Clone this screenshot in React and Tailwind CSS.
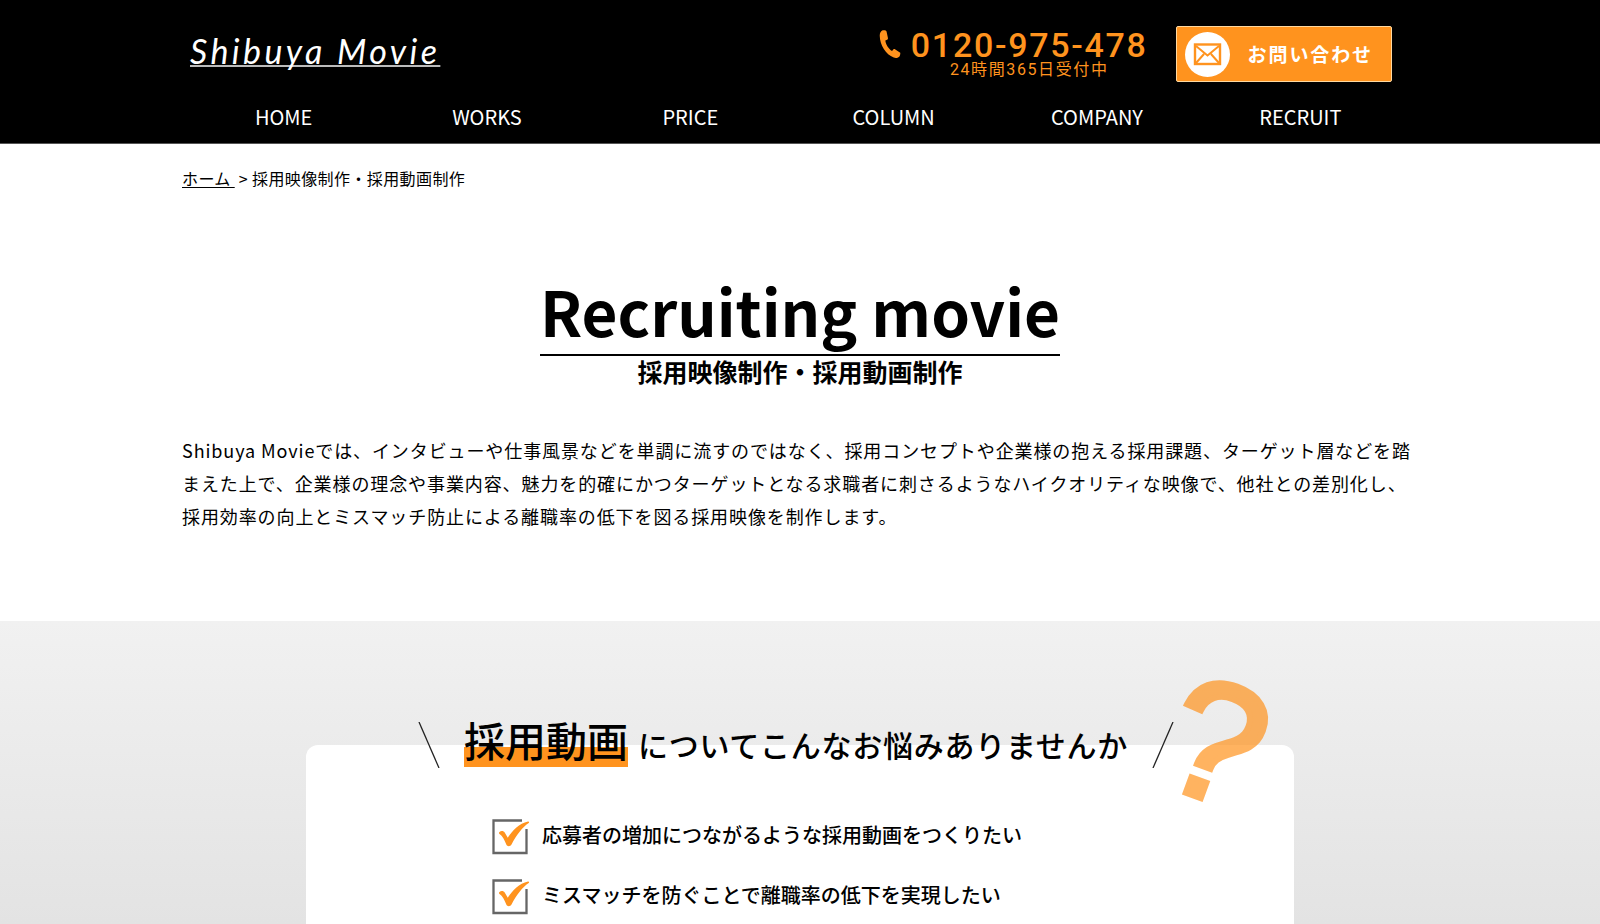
const menu = ['HOME', 'WORKS', 'PRICE', 'COLUMN', 'COMPANY', 'RECRUIT'];

const worries = [
    '応募者の増加につながるような採用動画をつくりたい',
    'ミスマッチを防ぐことで離職率の低下を実現したい',
];

function PhoneIcon() {
    return (
        <svg viewBox="0 0 22 30" className="w-[22px] h-7 mt-1" fill="#ff931e" aria-hidden="true">
            <path d="M3.2.4C1.2 1.2 0 3.2 0 6.2c.2 10 6.500 20.200 15 23.300 2.500.9 5 .3 6.300-1.500.6-.9.900-2.200.7-3.500l-5.300-3.700c-.8-.5-1.600-.4-2.200.2l-1.300 1.500C9.500 20.300 6.400 15.200 6 11.200l1.900-.8c.7-.3 1-.9.9-1.700L7.300 1.600C7 .5 5 0 3.200.4z" />
        </svg>
    );
}

function MailIcon() {
    return (
        <svg viewBox="0 0 45 45" className="w-[45px] h-[45px]" aria-hidden="true">
            <circle cx="22.500" cy="22.500" r="22.500" fill="#fff" />
            <g fill="none" stroke="#ff931e" strokeWidth="2">
                <rect x="10" y="12.500" width="25" height="19.500" strokeWidth="2.400" />
                <path d="M11 14l11.500 9.500L34 14M11 31l8-9M34 31l-8-9" />
            </g>
        </svg>
    );
}

function CheckIcon() {
    return (
        <svg viewBox="0 0 38 36" className="w-[38px] h-9 shrink-0" aria-hidden="true">
            <path d="M30 1.500H1.500V34H34.500V10" fill="none" stroke="#666" strokeWidth="2.300" />
            <path d="M7.500 13c1.500-1.500 4.300-1.200 5.500 1l2.800 4.800C20.500 11.500 27 4.500 36 2.500c1.200-.1 1.400.8.7 1.500C30 8.500 24.500 16 19.500 25.500c-1.200 2.300-4.300 2.300-5.200 0C12.500 21 10.500 17 7.500 15c-.7-.5-.7-1.300 0-2z" fill="#ff931e" />
        </svg>
    );
}

function Slash({ flip }) {
    return (
        <svg viewBox="0 0 22 46" className="w-[22px] h-[46px] mt-3" aria-hidden="true">
            <path d={flip ? 'M21 0L1 46' : 'M1 0L21 46'} stroke="#222" strokeWidth="1.300" />
        </svg>
    );
}

export default function App() {
    return (
        <div className="min-h-screen flex flex-col bg-white text-black font-['Noto_Sans_CJK_JP',sans-serif]">
            <header className="bg-black border-b border-[#555]">
                <div className="max-w-[1236px] mx-auto">
                    <div className="flex items-start justify-between pt-[26px] pl-2 pr-[26px]">
                        <a href="#" className="mt-2 text-white text-[34px] leading-[34px] italic tracking-widest font-[Lato,sans-serif] underline decoration-2 decoration-[#bbb] underline-offset-1 [text-decoration-skip-ink:none]">
                            Shibuya Movie
                        </a>
                        <div className="flex gap-7">
                            <a href="tel:0120975478" className="flex gap-[10px] text-[#ff931e] font-[Roboto,'Noto_Sans_CJK_JP',sans-serif]">
                                <PhoneIcon />
                                <span className="flex flex-col items-center">
                                    <span className="text-[34px] leading-[38px] font-medium tracking-wider">0120-975-478</span>
                                    <span className="text-base leading-3 tracking-widest">24時間365日受付中</span>
                                </span>
                            </a>
                            <a href="#" className="flex items-center gap-[18px] h-14 pl-2 pr-[18px] rounded-xs border border-[#ffd9a0] bg-[#ff931e] text-white">
                                <MailIcon />
                                <span className="text-[19px] font-bold tracking-widest">お問い合わせ</span>
                            </a>
                        </div>
                    </div>
                    <nav className="grid grid-cols-6 pr-4 pt-[18px] pb-[9px]">
                        {menu.map((item) => (
                            <a key={item} href="#" className="text-center text-white text-xl leading-[34px]">
                                {item}
                            </a>
                        ))}
                    </nav>
                </div>
            </header>

            <main className="flex-1 flex flex-col">
                <div className="w-full max-w-[1236px] mx-auto">
                    <p className="pt-[22px] flex gap-1 text-base tracking-wide">
                        <a href="#" className="underline underline-offset-2 whitespace-pre">ホーム </a>
                        <span>&gt;</span>
                        <span>採用映像制作・採用動画制作</span>
                    </p>
                    <div className="pt-[76px] flex flex-col items-center">
                        <h1 className="border-b-2 border-black text-[62px] leading-[88px] font-bold">Recruiting movie</h1>
                        <h2 className="text-[25px] leading-[30px] font-bold">採用映像制作・採用動画制作</h2>
                    </div>
                    <p className="pt-12 pb-[88px] text-lg leading-[33px] tracking-wider">
                        Shibuya Movieでは、インタビューや仕事風景などを単調に流すのではなく、採用コンセプトや企業様の抱える採用課題、ターゲット層などを踏まえた上で、企業様の理念や事業内容、魅力を的確にかつターゲットとなる求職者に刺さるようなハイクオリティな映像で、他社との差別化し、採用効率の向上とミスマッチ防止による離職率の低下を図る採用映像を制作します。
                    </p>
                </div>

                <section className="flex-1 flex flex-col px-4 pt-[124px] bg-linear-to-b from-[#f1f1f1] to-[#e3e3e3]">
                    <div className="relative flex-1 w-full max-w-[988px] mx-auto bg-white rounded-t-xl">
                        <div className="-mt-[35px] pr-2 flex justify-center items-center gap-6">
                            <Slash />
                            <h2 className="flex items-baseline gap-[10px] text-[30px] font-medium tracking-wide">
                                <span className="text-[41px] leading-[56px] tracking-normal bg-linear-to-b from-transparent from-64% to-[#ff931e] to-64%">採用動画</span>
                                についてこんなお悩みありませんか
                            </h2>
                            <Slash flip />
                        </div>
                        <span className="absolute right-8 -top-[98px] rotate-20 opacity-70 text-[#ff931e] text-[168px] leading-[190px] [-webkit-text-stroke:6px_#ff931e] font-['Liberation_Sans',sans-serif]">
                            ?
                        </span>
                        <ul className="pl-[186px] pt-[51px] flex flex-col gap-6">
                            {worries.map((worry) => (
                                <li key={worry} className="flex items-start gap-3 text-xl leading-8 font-medium">
                                    <CheckIcon />
                                    {worry}
                                </li>
                            ))}
                        </ul>
                    </div>
                </section>
            </main>
        </div>
    );
}
